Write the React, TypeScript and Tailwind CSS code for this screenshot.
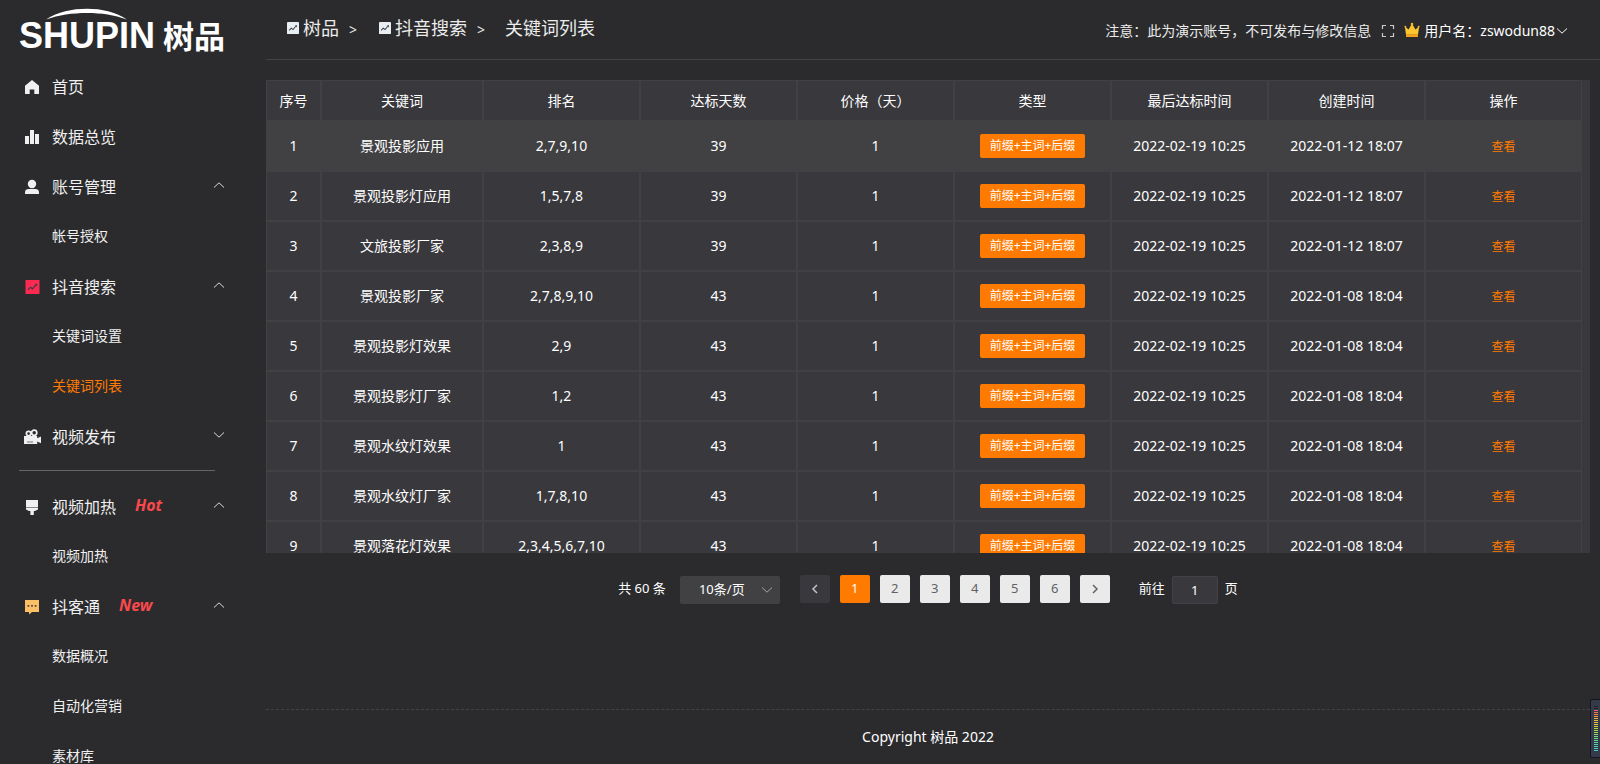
import { useState, type ReactNode } from "react";
import clsx from "clsx";

type MenuItem = {
  title: string;
  icon: ReactNode;
  badge?: string;
  open?: boolean;
  children?: string[];
};

type Keyword = {
  name: string;
  rank: string;
  days: number;
  created: string;
};

const COLUMNS = [
  "序号",
  "关键词",
  "排名",
  "达标天数",
  "价格（天）",
  "类型",
  "最后达标时间",
  "创建时间",
  "操作",
];

const KEYWORDS: Keyword[] = [
  { name: "景观投影应用", rank: "2,7,9,10", days: 39, created: "2022-01-12 18:07" },
  { name: "景观投影灯应用", rank: "1,5,7,8", days: 39, created: "2022-01-12 18:07" },
  { name: "文旅投影厂家", rank: "2,3,8,9", days: 39, created: "2022-01-12 18:07" },
  { name: "景观投影厂家", rank: "2,7,8,9,10", days: 43, created: "2022-01-08 18:04" },
  { name: "景观投影灯效果", rank: "2,9", days: 43, created: "2022-01-08 18:04" },
  { name: "景观投影灯厂家", rank: "1,2", days: 43, created: "2022-01-08 18:04" },
  { name: "景观水纹灯效果", rank: "1", days: 43, created: "2022-01-08 18:04" },
  { name: "景观水纹灯厂家", rank: "1,7,8,10", days: 43, created: "2022-01-08 18:04" },
  { name: "景观落花灯效果", rank: "2,3,4,5,6,7,10", days: 43, created: "2022-01-08 18:04" },
];

const METER_COLORS = [
  "#20242d", "#20242d", "#f0625a", "#f27650", "#f28a48", "#f29c40", "#efae3c",
  "#ecbc3a", "#e6c83a", "#dcd03c", "#ccd440", "#bad846", "#a8da4e", "#98dc58",
  "#88de66", "#7ade76", "#6cde86", "#60dc96", "#56d8a4", "#50d4b0", "#4cd0b8",
  "#48ccc0", "#46c8c4",
];

function ChartIcon({ className, color }: { className: string; color: string }) {
  return (
    <svg viewBox="0 0 14 14" className={className} aria-hidden="true">
      <rect width="14" height="14" rx="0.5" fill={color} />
      <path d="M2.5 9.8 5 7.2l2 1.6L10.3 5" fill="none" stroke="#3c3c46" strokeWidth="1.2" />
      <path d="M9.2 3.800h2.500v2.500z" fill="#3c3c46" />
    </svg>
  );
}

function Chevron({ className, d }: { className: string; d: string }) {
  return (
    <svg viewBox="0 0 12 12" className={className} fill="none" stroke="currentColor" aria-hidden="true">
      <path d={d} />
    </svg>
  );
}

const UP = "M1 8.500 6 3.800l5 4.700";
const DOWN = "M1 3.500 6 8.200l5-4.700";

const ICON = "h-4 w-4";

const MENU: MenuItem[] = [
  {
    title: "首页",
    icon: (
      <svg viewBox="0 0 16 16" className={ICON} fill="#f0f0f0">
        <path d="M8 1 1 6.8V15h4.7v-4.6h4.6V15H15V6.8z" />
      </svg>
    ),
  },
  {
    title: "数据总览",
    icon: (
      <svg viewBox="0 0 16 16" className={ICON} fill="#f0f0f0">
        <path d="M1 7h4v8H1zM6 1h4v14H6zM11 5h4v10h-4z" />
      </svg>
    ),
  },
  {
    title: "账号管理",
    icon: (
      <svg viewBox="0 0 16 16" className={ICON} fill="#f0f0f0">
        <circle cx="8" cy="5" r="4.2" />
        <path d="M1 15v-1.8C1 11 2.6 10 4.6 10h6.8c2 0 3.6 1 3.6 3.2V15z" />
      </svg>
    ),
    open: true,
    children: ["帐号授权"],
  },
  {
    title: "抖音搜索",
    icon: <ChartIcon className="ml-px h-[14px] w-[15px]" color="#fb2a53" />,
    open: true,
    children: ["关键词设置", "关键词列表"],
  },
  {
    title: "视频发布",
    icon: (
      <svg viewBox="0 0 18 16" className="h-4 w-[18px]">
        <g fill="none" stroke="#f0f0f0" strokeWidth="1.7">
          <circle cx="4.6" cy="4.6" r="2.2" />
          <circle cx="10.2" cy="3.8" r="2.6" />
        </g>
        <path d="M0 7h13.2v2.2L17 7.600v6.600l-3.800-1.600V15H0z" fill="#f0f0f0" />
        <path d="M3 13h6" stroke="#77777a" />
      </svg>
    ),
    open: false,
    children: [],
  },
];

const PROMO_MENU: MenuItem[] = [
  {
    title: "视频加热",
    badge: "Hot",
    icon: (
      <svg viewBox="0 0 16 16" className={ICON} fill="#f0f0f0">
        <path d="M2 1h12v7H2z" />
        <path d="M2 8h12v1H2z" fill="#8a8a8c" />
        <path d="M2 9h12v1.500L11 12H9.800v4H6.400v-4H5l-3-1.500z" />
      </svg>
    ),
    open: true,
    children: ["视频加热"],
  },
  {
    title: "抖客通",
    badge: "New",
    icon: (
      <svg viewBox="0 0 16 16" className={ICON}>
        <path d="M1 1h14v12H8l-3 2.5V13H1z" fill="#fbc067" />
        <path d="M3.5 6h1.8v1.8H3.5zM7.1 6h1.8v1.8H7.1zM10.7 6h1.8v1.8h-1.8z" fill="#5a4a35" />
      </svg>
    ),
    open: true,
    children: ["数据概况", "自动化营销", "素材库"],
  },
];

function MenuGroup({ items, active }: { items: MenuItem[]; active: string }) {
  return (
    <ul>
      {items.map((item) => (
        <li key={item.title}>
          <button type="button" className="flex h-[50px] w-full items-center pr-[25px] pl-[23px] text-left">
            <span className="flex w-[29px] shrink-0 items-center pl-px">{item.icon}</span>
            <span className="text-base text-[#f0f0f0]">{item.title}</span>
            {item.badge ? (
              <span className="mb-1 ml-[19px] text-base leading-5 font-bold text-[#fb484c] italic">
                {item.badge}
              </span>
            ) : null}
            {item.children ? (
              <Chevron className="mb-1 ml-auto h-3 w-3 text-[#dcdcdc]" d={item.open ? UP : DOWN} />
            ) : null}
          </button>
          {item.open && item.children ? (
            <ul>
              {item.children.map((child) => (
                <li key={child}>
                  <a
                    href="#"
                    className={clsx(
                      "flex h-[50px] items-center pb-[2px] pl-[52px] text-sm",
                      child === active ? "text-[#ff7a00]" : "text-[#f0f0f0]",
                    )}
                  >
                    {child}
                  </a>
                </li>
              ))}
            </ul>
          ) : null}
        </li>
      ))}
    </ul>
  );
}

function Logo() {
  return (
    <a href="#" className="relative flex h-[62px] shrink-0 items-center gap-2 pt-[10px] pl-[19px] text-white">
      <svg viewBox="0 0 82 12" className="absolute top-[8px] left-[46px] h-3 w-[82px]" fill="currentColor">
        <path d="M0 11.500C12 4 26 .8 41 .8S69 4 81 11.500C68 7 56 5 41 5S13 7 0 11.500z" />
      </svg>
      <span className="font-['Liberation_Sans',sans-serif] text-[36px] leading-none font-bold">SHUPIN</span>
      <span className="text-[31px] leading-none font-bold">树品</span>
    </a>
  );
}

function Sidebar() {
  return (
    <aside className="flex w-[250px] shrink-0 flex-col overflow-hidden">
      <Logo />
      <nav>
        <MenuGroup items={MENU} active="关键词列表" />
        <hr className="mt-2 mr-[35px] mb-[11px] ml-[19px] border-[#666668]" />
        <MenuGroup items={PROMO_MENU} active="关键词列表" />
      </nav>
    </aside>
  );
}

function Header() {
  return (
    <header className="flex h-[60px] shrink-0 items-center justify-between border-b border-[#434347] pr-8 pl-[21px] text-[#ececec]">
      <nav className="mb-1 flex items-center text-lg" aria-label="breadcrumb">
        <a href="#" className="flex items-center gap-1">
          <ChartIcon className="h-3 w-3" color="#e8eef2" />
          树品
        </a>
        <span className="mt-1 ml-[10px] w-[30px] text-sm">&gt;</span>
        <a href="#" className="flex items-center gap-1">
          <ChartIcon className="h-3 w-3" color="#e8eef2" />
          抖音搜索
        </a>
        <span className="mt-1 ml-[10px] w-7 text-sm">&gt;</span>
        <span>关键词列表</span>
      </nav>
      <div className="mt-[2px] flex items-center text-sm">
        <span>注意：此为演示账号，不可发布与修改信息</span>
        <button type="button" aria-label="全屏" className="ml-[10px]">
          <svg viewBox="0 0 14 14" className="h-[14px] w-[14px]" fill="none" stroke="#c8cccf" strokeWidth="1.2">
            <path d="M1.500 5V1.500H5M9 1.500h3.500V5M12.500 9v3.500H9M5 12.500H1.500V9" />
          </svg>
        </button>
        <svg viewBox="0 0 16 16" className="mr-1 mb-[2px] ml-[9px] h-4 w-4" aria-hidden="true">
          <path d="M2 12.500.8 4.500l3.800 3L8 1.500l3.400 6 3.800-3-1.200 8z" fill="#fbc62f" />
          <path d="M2 12.200h12V15H2z" fill="#f3a51c" />
          <circle cx="8" cy="2" r="1.300" fill="#f6b12a" />
          <circle cx="1.400" cy="4.800" r="1" fill="#f6b12a" />
          <circle cx="14.600" cy="4.800" r="1" fill="#f6b12a" />
        </svg>
        <button type="button" className="flex items-center text-white">
          用户名：zswodun88
          <Chevron className="ml-px h-3 w-3" d={DOWN} />
        </button>
      </div>
    </header>
  );
}

function KeywordTable() {
  return (
    <div className="h-[473px] overflow-hidden bg-[#39383d] pr-2">
      <table className="w-full table-fixed border-separate border-spacing-0 text-center text-sm text-white">
        <colgroup>
          <col className="w-[55px]" />
          <col className="w-[162px]" />
        </colgroup>
        <thead>
          <tr className="h-[41px]">
            {COLUMNS.map((column) => (
              <th key={column} className="border border-[#414143] font-normal">
                {column}
              </th>
            ))}
          </tr>
        </thead>
        <tbody>
          {KEYWORDS.map((row, index) => (
            <tr
              key={row.name}
              className={clsx("h-[50px] *:border *:border-[#414143]", index === 0 && "bg-[#414143]")}
            >
              <td>{index + 1}</td>
              <td>{row.name}</td>
              <td>{row.rank}</td>
              <td>{row.days}</td>
              <td>1</td>
              <td>
                <span className="inline-flex h-6 items-center rounded-xs bg-[#ff7a00] px-[10px] align-middle text-xs">
                  前缀+主词+后缀
                </span>
              </td>
              <td>2022-02-19 10:25</td>
              <td>{row.created}</td>
              <td>
                <a href="#" className="align-middle text-xs text-[#ff7a00]">
                  查看
                </a>
              </td>
            </tr>
          ))}
        </tbody>
      </table>
    </div>
  );
}

function Pagination() {
  const [page, setPage] = useState(1);

  return (
    <div className="mt-[21px] flex items-center justify-center text-[13px] text-white">
      <span className="mr-[14px]">共 60 条</span>
      <div className="relative mt-[2px] mr-5">
        <select
          aria-label="每页条数"
          className="h-7 w-[100px] appearance-none rounded-xs bg-[#414143] pr-4 text-center"
        >
          <option>10条/页</option>
          <option>20条/页</option>
        </select>
        <Chevron className="pointer-events-none absolute top-2 right-[7px] h-3 w-3 text-[#a0a3a8]" d={DOWN} />
      </div>
      <div className="flex gap-[10px]">
        <button
          type="button"
          aria-label="上一页"
          onClick={() => setPage(Math.max(1, page - 1))}
          className="flex h-7 w-[30px] items-center justify-center rounded-xs bg-[#39383d] text-[#c0c4cc]"
        >
          <Chevron className="h-3 w-3 stroke-[1.5]" d="M8 2 4 6l4 4" />
        </button>
        {[1, 2, 3, 4, 5, 6].map((n) => (
          <button
            key={n}
            type="button"
            onClick={() => setPage(n)}
            className={clsx(
              "h-7 w-[30px] rounded-xs",
              n === page ? "bg-[#ff7a00] text-white" : "bg-[#eaeaea] text-[#606266]",
            )}
          >
            {n}
          </button>
        ))}
        <button
          type="button"
          aria-label="下一页"
          onClick={() => setPage(Math.min(6, page + 1))}
          className="flex h-7 w-[30px] items-center justify-center rounded-xs bg-[#eaeaea] text-[#606266]"
        >
          <Chevron className="h-3 w-3 stroke-[1.5]" d="m4 2 4 4-4 4" />
        </button>
      </div>
      <label className="ml-[29px] flex items-center gap-[7px]">
        前往
        <input
          type="text"
          value={page}
          onChange={(e) => setPage(Number(e.target.value) || 1)}
          className="mt-[2px] h-7 w-[46px] rounded-xs border border-[#434347] bg-[#39383d] text-center"
        />
        页
      </label>
    </div>
  );
}

export default function App() {
  return (
    <div className="flex h-screen overflow-hidden bg-[#2b2b2d] font-['Noto_Sans','Noto_Sans_CJK_SC',sans-serif]">
      <Sidebar />
      <div className="flex min-w-0 flex-1 flex-col pl-4">
        <Header />
        <main className="mt-5 mr-[10px]">
          <KeywordTable />
          <Pagination />
        </main>
        <footer className="mt-auto mr-[10px] flex h-[55px] shrink-0 items-center justify-center border-t border-dashed border-[#434347] text-sm text-white">
          Copyright 树品 2022
        </footer>
      </div>
      <div className="fixed right-0 bottom-[6px] flex h-[59px] w-[10px] flex-col items-end gap-px rounded-l-xs border border-r-0 border-[#14161f] bg-[#343a4a] pt-[6px] pr-[2px]">
        {METER_COLORS.map((color, index) => (
          <span key={index} className="h-px w-1 shrink-0" style={{ backgroundColor: color }} />
        ))}
      </div>
    </div>
  );
}
